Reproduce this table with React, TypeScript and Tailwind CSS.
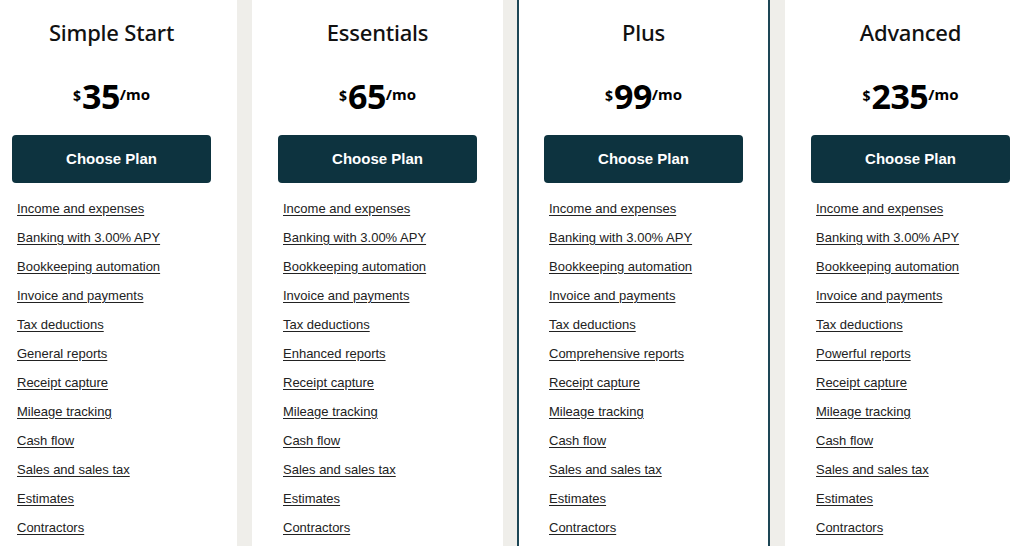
import React from 'react';

type Plan = {
  name: string;
  price: string;
  reports: string;
  featured?: boolean;
};

const plans: Plan[] = [
  { name: 'Simple Start', price: '35', reports: 'General reports' },
  { name: 'Essentials', price: '65', reports: 'Enhanced reports' },
  { name: 'Plus', price: '99', reports: 'Comprehensive reports', featured: true },
  { name: 'Advanced', price: '235', reports: 'Powerful reports' },
];

const featuresFor = (plan: Plan) => [
  'Income and expenses',
  'Banking with 3.00% APY',
  'Bookkeeping automation',
  'Invoice and payments',
  'Tax deductions',
  plan.reports,
  'Receipt capture',
  'Mileage tracking',
  'Cash flow',
  'Sales and sales tax',
  'Estimates',
  'Contractors',
];

function PlanCard({ plan }: { plan: Plan }) {
  return (
    <div
      className={
        plan.featured
          ? 'w-[253px] ml-[-1px] shrink-0 bg-white border-x-2 border-[#1d4655] pt-[18px] px-[25px]'
          : 'w-[251px] shrink-0 bg-white pt-[18px] px-[26px]'
      }
    >
      {/* title */}
      <h2 className="text-center text-[22px] leading-[28px] font-medium text-[#111] font-['Noto_Sans',sans-serif] tracking-[-0.2px]">
        {plan.name}
      </h2>

      {/* price */}
      <div className="mt-[30px] h-[40px] flex items-center justify-center font-['Noto_Sans',sans-serif] text-black">
        <span className="text-[14px] font-bold self-start mt-[9px] mr-[1px]">$</span>
        <span className="text-[34px] leading-[40px] font-bold tracking-[-0.5px]">{plan.price}</span>
        <span className="text-[15px] font-bold self-start mt-[7px]">/mo</span>
      </div>

      {/* button */}
      <button className="mt-[19px] w-[199px] h-[48px] mx-auto flex items-center justify-center rounded-[4px] bg-[#0d333f] text-white text-[15px] font-bold font-['Liberation_Sans',Arial,sans-serif]">
        Choose Plan
      </button>

      {/* features */}
      <ul className="mt-[11px] pl-[5px] font-['Liberation_Sans',Arial,sans-serif]">
        {featuresFor(plan).map((f) => (
          <li key={f} className="h-[29px] flex items-center">
            <a href="#" className="text-[13px] text-[#222] underline underline-offset-[2px]">
              {f}
            </a>
          </li>
        ))}
      </ul>
    </div>
  );
}

export default function App() {
  return (
    <div className="w-[1024px] h-[546px] overflow-hidden bg-[#efeeea]">
      <div className="flex gap-[15px] ml-[-14px] h-full">
        {plans.map((p) => (
          <PlanCard key={p.name} plan={p} />
        ))}
      </div>
    </div>
  );
}
